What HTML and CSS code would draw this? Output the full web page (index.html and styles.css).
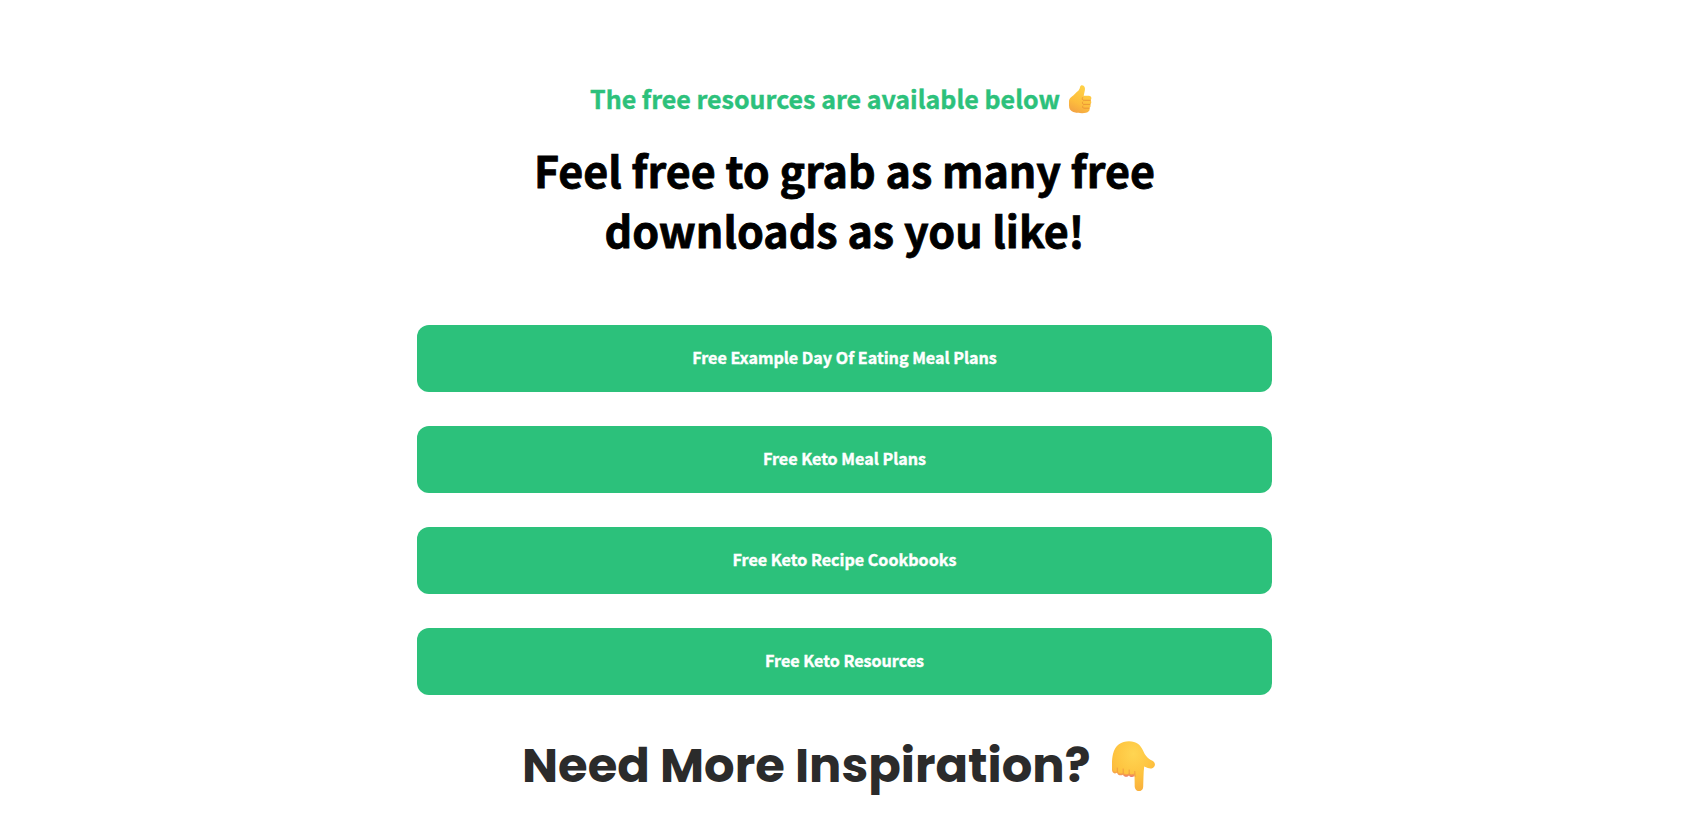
FILE: index.html
```html
<!DOCTYPE html>
<html lang="en">
<head>
<meta charset="utf-8">
<title>Free resources</title>
<link rel="stylesheet" href="styles.css">
</head>
<body>
<main class="page">
  <p class="eyebrow"><span>The free resources are available below</span>
    <svg class="thumb" viewBox="0 0 23 29" aria-hidden="true">
      <defs>
        <linearGradient id="skin" x1="0.7" y1="0" x2="0.3" y2="1"><stop offset="0" stop-color="#ffd347"/><stop offset="0.65" stop-color="#fdbd3d"/><stop offset="1" stop-color="#f3a343"/></linearGradient>
      </defs>
      <path fill="url(#skin)" d="M11 2.200C11.400.2 13.200-.2 14.600.8c1.800 1.300 1.500 4 .9 6.300l-.8 3.600h5.100c2.600 0 3.400 3 1.700 4.600 1.200 1.200 1 3.200-.3 4 .8 1.400.4 3-.8 3.700.5 1.300.2 2.500-.7 3.300-1.200 1.700-3.900 1.900-6.500 1.900C7 28.200 0 27.800 0 20.600v-4.200c0-3.500 3-4.600 5.500-7.200C8.500 6.200 10.200 5.600 11 2.200Z"/>
      <path class="crease" d="M21.400 15.300h-6.200c-2 0-2.500-1.500-1.600-2.700M21 19.400h-6c-1.500 0-2-1.300-1.400-2.400M20.300 23.200H15c-1.300 0-1.800-1.200-1.200-2.200"/>
    </svg>
  </p>
  <h1 class="title"><span class="line">Feel free to grab as many free</span><span class="line">downloads as you like!</span></h1>
  <nav class="links">
    <a class="button"><span>Free Example Day Of Eating Meal Plans</span></a>
    <a class="button"><span>Free Keto Meal Plans</span></a>
    <a class="button"><span>Free Keto Recipe Cookbooks</span></a>
    <a class="button"><span>Free Keto Resources</span></a>
  </nav>
  <h2 class="more"><span>Need More Inspiration?</span>
    <svg class="point" viewBox="0 0 43 50" aria-hidden="true">
      <defs>
        <radialGradient id="palm" cx="0.5" cy="0.25" r="0.75"><stop offset="0" stop-color="#ffd552"/><stop offset="0.6" stop-color="#fec33f"/><stop offset="1" stop-color="#f9b03d"/></radialGradient>
        <linearGradient id="tips" x1="0" y1="0" x2="0" y2="1"><stop offset="0" stop-color="#fdbd41"/><stop offset="0.8" stop-color="#f7a349"/><stop offset="1" stop-color="#e97773"/></linearGradient>
      </defs>
      <path fill="url(#tips)" d="M0 20h24v11.500c-.8 5.500-5.500 5.500-7 3-1.800 2.200-5 1.600-6-.8-2.500 1.300-5.500.3-6-2C2 33.500 0 31.500 0 28.500Z"/>
      <path fill="url(#palm)" d="M1 13C3 4 9.500.2 17 .2c7.500 0 11.500 3.500 14 9.300 2.200 5.200 4.500 7.800 9 10 2.600 1.300 3.600 3.700 2.500 5.700-1.200 2.300-4 2.900-6.700 1.900l-3.600-1.500c-.8 6.500-.7 12.900-1 20 0 6.200-8 6-8.500.2L22.500 32c-1 1.500-4 1.500-5.300.3-1.700 1.500-4.700 1-6-.6-2 1.200-4.700.6-6-1.200C3 31.500 0 30 0 27c0-5-.2-9 1-14Z"/>
      <path class="fold" d="M5.300 27v4M11.200 28v4.200M17.200 29v4M22.800 30.500l.3 5"/>
    </svg>
  </h2>
</main>
</body>
</html>
```
FILE: styles.css
```css
* { box-sizing: border-box; }
body {
  margin: 0;
  background: #fff;
  font-family: "Source Sans Pro", "Noto Sans CJK SC", sans-serif;
  font-weight: 700;
}
.page {
  width: 855px;
  height: 830px;
  margin: 0 auto 0 417px;
  padding-top: 78px;
  display: flex;
  flex-direction: column;
  overflow: hidden;
}
.eyebrow {
  margin: 0;
  height: 40px;
  display: flex;
  gap: 9px;
  padding-left: 173px;
  color: #2cc17b;
  font-size: 25px;
  line-height: 40px;
  white-space: nowrap;
  -webkit-text-stroke: 0.4px;
}
.thumb { width: 23px; height: 29px; margin-top: 7px; }
.crease { fill: none; stroke: #e99235; stroke-width: 0.9; stroke-linecap: round; }
.title {
  margin: 21px 0 0;
  font-size: 43px;
  line-height: 60px;
  text-align: center;
  color: #000;
  -webkit-text-stroke: 0.8px;
}
.line { display: block; white-space: nowrap; }
.links {
  margin-top: 66px;
  display: flex;
  flex-direction: column;
  gap: 34px;
}
.button {
  display: flex;
  height: 67px;
  padding-bottom: 3px;
  align-items: center;
  justify-content: center;
  border-radius: 12px;
  background: #2cc17b;
  color: #fff;
  font-size: 16.1px;
  line-height: 24px;
  -webkit-text-stroke: 0.4px;
}
.more {
  margin: 35px 0 0;
  height: 72px;
  display: flex;
  gap: 21px;
  padding-left: 105px;
  color: #2b2b2b;
  font-family: Poppins, Inter, sans-serif;
  font-size: 48px;
  line-height: 72px;
  white-space: nowrap;
}
.point { width: 43px; height: 50px; margin-top: 11px; }
.fold { fill: none; stroke: #ed9440; stroke-width: 0.8; stroke-linecap: round; }
```
